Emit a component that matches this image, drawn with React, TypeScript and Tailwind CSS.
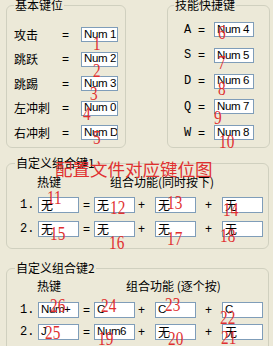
// Key-binding settings panel (XP style) with red annotation numbers on top

const cjk = "font-['Noto_Sans_CJK_SC','DejaVu_Sans',sans-serif]";

const basicKeys = [
  ['攻击', 'Num 1'],
  ['跳跃', 'Num 2'],
  ['跳踢', 'Num 3'],
  ['左冲刺', 'Num 0'],
  ['右冲刺', 'Num D'],
];

const skillKeys = [
  ['A', 'Num 4'],
  ['S', 'Num 5'],
  ['D', 'Num 6'],
  ['Q', 'Num 7'],
  ['W', 'Num 8'],
];

// annotation marks drawn over the form
const marks: [string, string][] = [
  ['1', 'left-[93px] top-[35px]'],
  ['2', 'left-[93px] top-[62px]'],
  ['3', 'left-[90px] top-[85px]'],
  ['4', 'left-[83px] top-[105px]'],
  ['5', 'left-[93px] top-[129px]'],
  ['6', 'left-[218px] top-[24px]'],
  ['7', 'left-[218px] top-[54px]'],
  ['8', 'left-[218px] top-[80px]'],
  ['9', 'left-[214px] top-[109px]'],
  ['10', 'left-[219px] top-[133px]'],
  ['11', 'left-[47px] top-[189px]'],
  ['12', 'left-[110px] top-[199px]'],
  ['13', 'left-[167px] top-[194px]'],
  ['14', 'left-[223px] top-[201px]'],
  ['15', 'left-[50px] top-[225px]'],
  ['16', 'left-[109px] top-[234px]'],
  ['17', 'left-[167px] top-[230px]'],
  ['18', 'left-[220px] top-[227px]'],
  ['26', 'left-[50px] top-[297px]'],
  ['24', 'left-[101px] top-[297px]'],
  ['23', 'left-[165px] top-[296px]'],
  ['22', 'left-[220px] top-[309px]'],
  ['25', 'left-[45px] top-[324px]'],
  ['19', 'left-[98px] top-[330px]'],
  ['20', 'left-[168px] top-[330px]'],
  ['21', 'left-[221px] top-[329px]'],
];

function Box({ value, className = '' }: { value: string; className?: string }) {
  const isCjk = /[\u4e00-\u9fff]/.test(value);
  return (
    <div
      className={`border border-[#7F9DB9] bg-white flex items-center pl-[2px] overflow-hidden whitespace-nowrap leading-none text-black ${
        isCjk ? `${cjk} text-[12px]` : "font-['Liberation_Sans',sans-serif] text-[11.5px] tracking-[-0.4px]"
      } ${className}`}
    >
      {value}
    </div>
  );
}

function ComboRow({ n, keys }: { n: string; keys: string[] }) {
  return (
    <div className="flex items-center h-[16px] pl-[13px]">
      <span className="w-[18px] font-['Liberation_Mono',monospace] text-[12px]">{n}</span>
      <Box value={keys[0]} className="w-[41px] h-[16px]" />
      <span className="w-[15px] text-center text-[12px] font-['Liberation_Sans',sans-serif]">=</span>
      <Box value={keys[1]} className="w-[41px] h-[16px]" />
      <span className="w-[20px] pl-[3px] text-[12px] font-['Liberation_Sans',sans-serif]">+</span>
      <Box value={keys[2]} className="w-[41px] h-[16px]" />
      <span className="w-[26px] pl-[9px] text-[12px] font-['Liberation_Sans',sans-serif]">+</span>
      <Box value={keys[3]} className="w-[41px] h-[16px]" />
    </div>
  );
}

export default function App() {
  return (
    <div className={`relative w-[273px] h-[346px] overflow-hidden bg-[#ECE9D8] text-black ${cjk}`}>
      {/* ── top: basic keys + skill shortcuts ── */}
      <div className="flex -mt-[2px]">
        <fieldset className="ml-[6px] w-[120px] border border-[#D0D0BF] rounded-[6px]">
          <legend className="ml-[7px] px-[1px] text-[12px] leading-[14px]">基本键位</legend>
          <div className="flex flex-col gap-[9.5px] pt-[15px] pb-[7px] pl-[7px]">
            {basicKeys.map(([label, key]) => (
              <div key={label} className="flex items-center h-[15px] text-[12px]">
                <span className="w-[48px]">{label}</span>
                <span className="w-[19px] font-['Liberation_Sans',sans-serif]">=</span>
                <Box value={key} className="w-[37px] h-[15px]" />
              </div>
            ))}
          </div>
        </fieldset>

        <fieldset className="ml-[41px] w-[103px] border border-[#D0D0BF] rounded-[6px]">
          <legend className="ml-[6px] px-[1px] text-[12px] leading-[14px]">技能快捷键</legend>
          <div className="flex flex-col gap-[10.75px] pt-[10px] pb-[7px] pl-[16px]">
            {skillKeys.map(([label, key]) => (
              <div key={label} className="flex items-center h-[15px] text-[12px]">
                <span className="w-[14px] font-['Liberation_Mono',monospace]">{label}</span>
                <span className="w-[16px] font-['Liberation_Sans',sans-serif]">=</span>
                <Box value={key} className="w-[40px] h-[15px]" />
              </div>
            ))}
          </div>
        </fieldset>
      </div>

      {/* ── custom combo 1 ── */}
      <fieldset className="mt-[8px] ml-[6px] w-[263px] border border-[#D0D0BF] rounded-[6px]">
        <legend className="ml-[8px] px-[1px] text-[12px] leading-[14px]">自定义组合键1</legend>
        <div className="flex flex-col pt-[5px] pb-[11px]">
          <div className="flex h-[14px] items-center pl-[30px] text-[12px]">
            <span className="w-[73px]">热键</span>
            <span>组合功能(同时按下)</span>
          </div>
          <div className="flex flex-col gap-[8px] mt-[8px]">
            <ComboRow n="1." keys={['无', '无', '无', '无']} />
            <ComboRow n="2." keys={['无', '无', '无', '无']} />
          </div>
        </div>
      </fieldset>

      {/* ── custom combo 2 ── */}
      <fieldset className="mt-[12px] ml-[6px] w-[263px] border border-[#D0D0BF] rounded-[6px]">
        <legend className="ml-[8px] px-[1px] text-[12px] leading-[14px]">自定义组合键2</legend>
        <div className="flex flex-col pt-[4px] pb-[12px]">
          <div className="flex h-[14px] items-center pl-[30px] text-[12px]">
            <span className="w-[89px]">热键</span>
            <span>组合功能 (逐个按)</span>
          </div>
          <div className="flex flex-col gap-[6px] mt-[9px]">
            <ComboRow n="1." keys={['Num+', 'C', 'C', 'C']} />
            <ComboRow n="2." keys={['J', 'Num6', '无', '无']} />
          </div>
        </div>
      </fieldset>

      {/* ── red annotation overlay ── */}
      <span className={`absolute left-[55px] top-[160px] text-[17.5px] leading-none text-[#e03030] whitespace-nowrap ${cjk}`}>
        配置文件对应键位图
      </span>
      {marks.map(([t, pos]) => (
        <span
          key={t}
          className={`absolute ${pos} origin-left scale-x-85 text-[18px] leading-none text-[#e03030] font-['Liberation_Serif',serif]`}
        >
          {t}
        </span>
      ))}
    </div>
  );
}
